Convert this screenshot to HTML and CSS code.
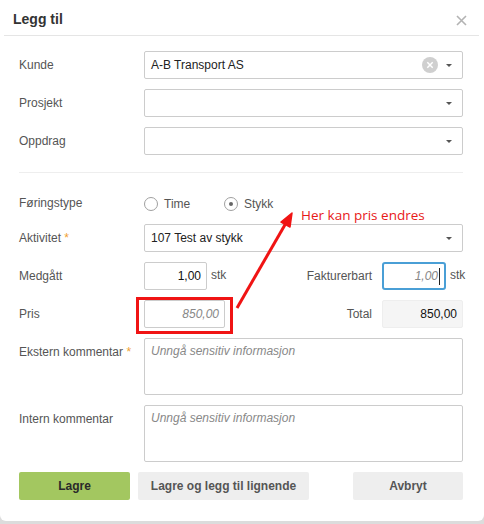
FILE: index.html
```html
<!DOCTYPE html>
<html lang="no">
<head>
    <meta charset="UTF-8">
    <meta name="viewport" content="width=device-width, initial-scale=1.0">
    <title>Legg til</title>
    <link rel="stylesheet" href="styles.css">
</head>
<body>
    <div class="modal">
        <div class="modal-header">
            <h4 class="modal-title">Legg til</h4>
            <span class="close">
                <svg width="11" height="11" viewBox="0 0 11 11"><path d="M1 1L10 10M10 1L1 10" stroke="#b3b3b3" stroke-width="1.6" fill="none"/></svg>
            </span>
        </div>

        <div class="modal-body">
            <!-- kunde / prosjekt / oppdrag -->
            <div class="row">
                <label>Kunde</label>
                <div class="select">
                    <span class="select-value">A-B Transport AS</span>
                    <span class="select-clear">
                        <svg width="16" height="16" viewBox="0 0 16 16"><circle cx="8" cy="8" r="8" fill="#cfcfcf"/><path d="M5.3 5.3L10.7 10.7M10.7 5.3L5.3 10.7" stroke="#fff" stroke-width="1.5"/></svg>
                    </span>
                    <span class="select-arrow"></span>
                </div>
            </div>
            <div class="row">
                <label>Prosjekt</label>
                <div class="select"><span class="select-value"></span><span class="select-arrow"></span></div>
            </div>
            <div class="row">
                <label>Oppdrag</label>
                <div class="select"><span class="select-value"></span><span class="select-arrow"></span></div>
            </div>

            <hr class="divider">

            <div class="row row-radio">
                <label>Føringstype</label>
                <div class="radios">
                    <span class="radio"><span class="radio-dot"></span>Time</span>
                    <span class="radio checked"><span class="radio-dot"></span>Stykk</span>
                </div>
            </div>
            <div class="row">
                <label>Aktivitet <span class="req">*</span></label>
                <div class="select"><span class="select-value">107 Test av stykk</span><span class="select-arrow"></span></div>
            </div>

            <!-- antall og pris -->
            <div class="row split">
                <label>Medgått</label>
                <div class="unit-field">
                    <span class="input num small">1,00</span>
                    <span class="unit">stk</span>
                </div>
                <label class="label-right">Fakturerbart</label>
                <div class="unit-field">
                    <span class="input num small focus">1,00<span class="caret"></span></span>
                    <span class="unit">stk</span>
                </div>
            </div>
            <div class="row split">
                <label>Pris</label>
                <span class="input num placeholder">850,00</span>
                <label class="label-right">Total</label>
                <span class="input num readonly">850,00</span>
            </div>

            <div class="row">
                <label>Ekstern kommentar <span class="req">*</span></label>
                <div class="textarea placeholder">Unngå sensitiv informasjon</div>
            </div>
            <div class="row">
                <label>Intern kommentar</label>
                <div class="textarea placeholder">Unngå sensitiv informasjon</div>
            </div>

            <div class="actions">
                <button class="btn btn-save">Lagre</button>
                <button class="btn">Lagre og legg til lignende</button>
                <button class="btn btn-cancel">Avbryt</button>
            </div>
        </div>

        <!-- merknad oppå skjemaet -->
        <div class="note-box"></div>
        <svg class="note-arrow" width="484" height="524" viewBox="0 0 484 524">
            <line x1="237" y1="308" x2="286" y2="223" stroke="#f01414" stroke-width="3"/>
            <polygon points="292,213 290,227 281,222" fill="#f01414" stroke="#f01414" stroke-width="1.5" stroke-linejoin="round"/>
        </svg>
        <div class="note-text">Her kan pris endres</div>
    </div>
</body>
</html>
```

FILE: styles.css
```css
body {
    margin: 0;
    background: #dcdcdc;
    font-family: 'Liberation Sans', Arial, sans-serif;
    font-size: 12px;
    color: #333;
}
.modal {
    position: relative;
    width: 484px;
    height: 521px;
    background: #fff;
    border-radius: 0 0 6px 6px;
}
.modal-header {
    display: flex;
    justify-content: space-between;
    align-items: center;
    margin: 0 5px 0 4px;
    padding: 11px 12px 8px 9px;
    border-bottom: 1px solid #e5e5e5;
}
.modal-title {
    margin: 0;
    font-size: 14px;
    line-height: 16px;
    font-weight: bold;
    color: #333;
}
.close {
    display: flex;
    margin-top: 2px;
}
.modal-body {
    padding: 15px 21px 22px 19px;
}
.row {
    display: grid;
    grid-template-columns: 125px 1fr;
    margin-bottom: 10px;
}
.row label {
    line-height: 28px;
    color: #555;
}
.req {
    color: #f0a030;
}
.select {
    display: flex;
    align-items: center;
    height: 28px;
    box-sizing: border-box;
    border: 1px solid #ccc;
    border-radius: 2px;
    padding: 0 10px 0 6px;
    color: #222;
}
.select-value {
    flex: 1;
}
.select-clear {
    display: flex;
    margin-right: 8px;
}
.select-arrow {
    width: 0;
    height: 0;
    border-left: 3px solid transparent;
    border-right: 3px solid transparent;
    border-top: 3px solid #555;
}
.divider {
    border: 0;
    border-top: 1px solid #eee;
    margin: 17px 0 20px;
}
.row-radio {
    margin-bottom: 11px;
}
.row-radio label {
    line-height: 20px;
}
.radios {
    display: flex;
    align-items: center;
    color: #555;
}
.radio {
    display: flex;
    align-items: center;
    width: 80px;
    margin-top: 2px;
}
.radio-dot {
    width: 12px;
    height: 12px;
    border: 1px solid #a0a0a0;
    border-radius: 50%;
    margin-right: 6px;
    display: flex;
    align-items: center;
    justify-content: center;
}
.radio.checked .radio-dot::after {
    content: '';
    width: 4px;
    height: 4px;
    border-radius: 50%;
    background: #666;
}
.split {
    grid-template-columns: 125px 81px 1fr 81px;
}
.row .label-right {
    text-align: right;
    padding-right: 10px;
}
.unit-field {
    display: flex;
    align-items: center;
    white-space: nowrap;
}
.unit {
    margin-left: 4px;
    color: #555;
    margin-bottom: 2px;
}
.input {
    display: flex;
    align-items: center;
    height: 28px;
    box-sizing: border-box;
    border: 1px solid #ccc;
    border-radius: 2px;
    padding: 0 6px;
    color: #111;
}
.num {
    justify-content: flex-end;
    padding-right: 5px;
}
.small {
    width: 63px;
    flex: none;
}
.focus {
    width: 64px;
    border: 2px solid #4a9fd6;
    border-radius: 3px;
    color: #888;
    font-style: italic;
    padding-right: 4px;
}
.caret {
    width: 1px;
    height: 17px;
    background: #222;
    margin-left: 1px;
}
.placeholder {
    color: #888;
    font-style: italic;
}
.readonly {
    background: #f5f5f5;
    border-color: #eee;
    color: #111;
}
.textarea {
    height: 57px;
    box-sizing: border-box;
    border: 1px solid #ccc;
    border-radius: 2px;
    padding: 5px 6px;
}
.actions {
    display: flex;
    gap: 8px;
    margin-top: 10px;
}
.btn {
    height: 28px;
    border: none;
    border-radius: 2px;
    background: #eee;
    color: #555;
    font-family: inherit;
    font-size: 12px;
    font-weight: bold;
    padding: 0;
    width: 171px;
}
.btn-save {
    width: 111px;
    background: #a3c760;
    color: #2a2a2a;
}
.btn-cancel {
    width: 110px;
    margin-left: auto;
}
.note-box {
    position: absolute;
    left: 136px;
    top: 297px;
    width: 91px;
    height: 31px;
    border: 3px solid #f01414;
}
.note-arrow {
    position: absolute;
    left: 0;
    top: 0;
    pointer-events: none;
}
.note-text {
    position: absolute;
    left: 301px;
    top: 206px;
    font-family: 'Open Sans', sans-serif;
    font-size: 13.5px;
    color: #e81818;
}
```
